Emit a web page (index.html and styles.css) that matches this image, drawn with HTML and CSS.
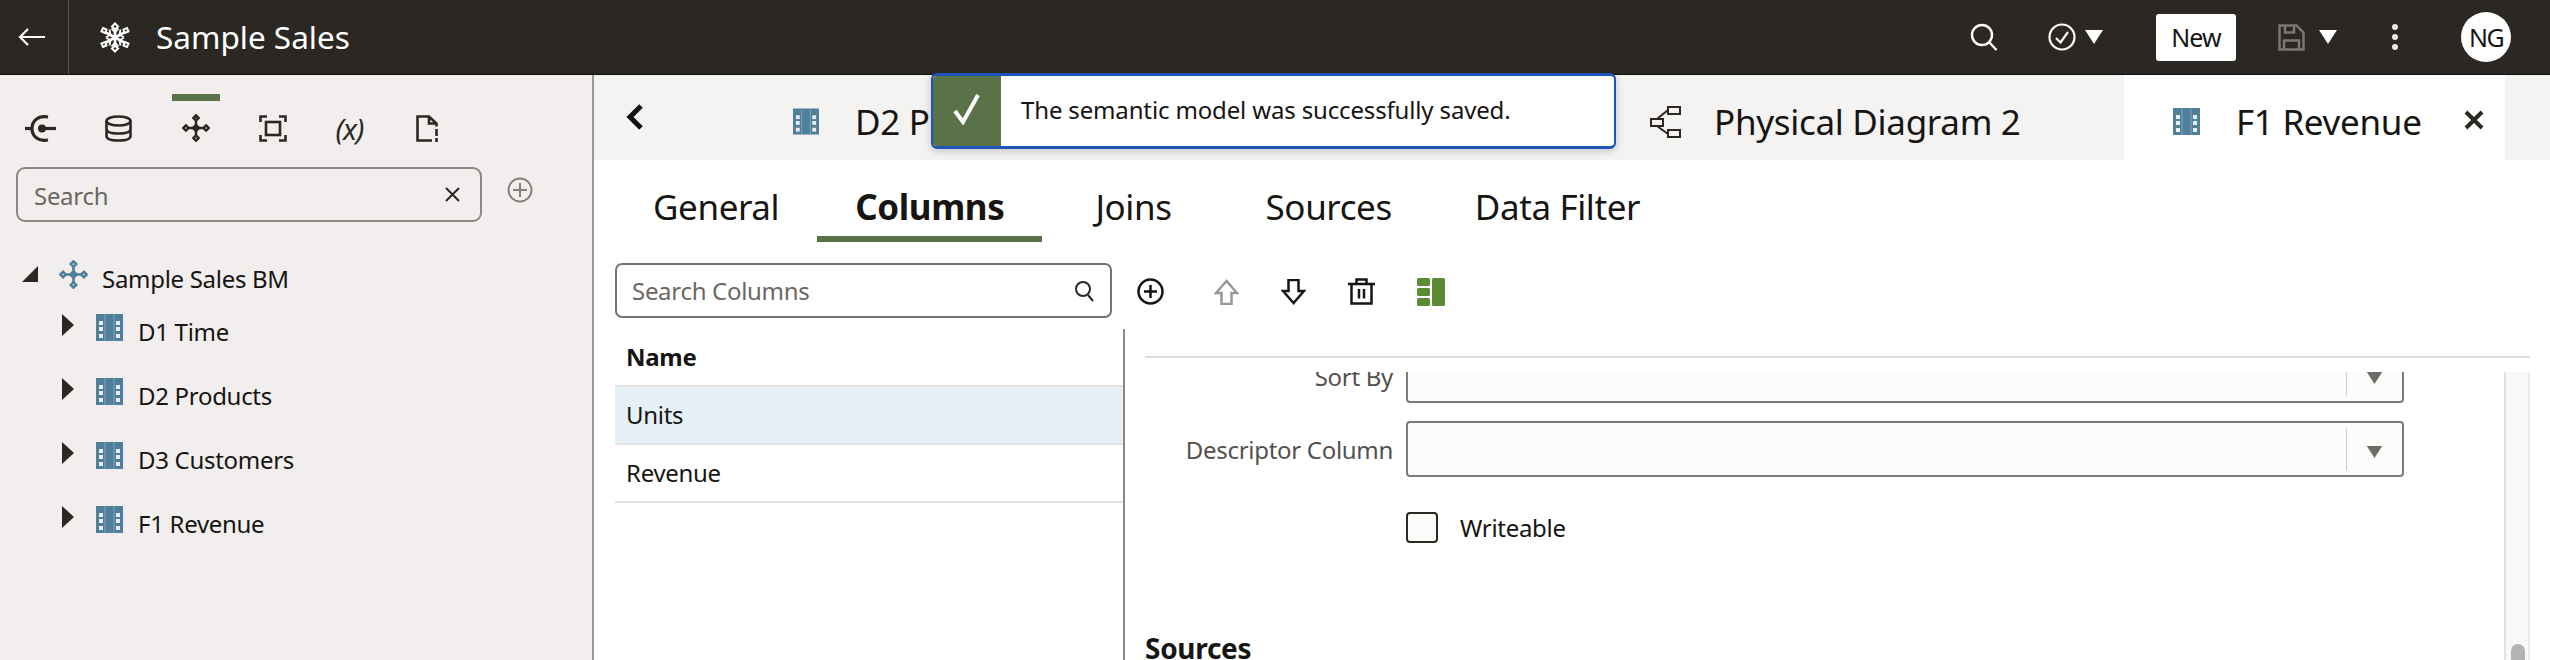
FILE: index.html
```html
<!DOCTYPE html>
<html lang="en">
<head>
  <meta charset="UTF-8" />
  <title>Sample Sales</title>
  <link rel="stylesheet" href="styles.css">
</head>
<body>
  <svg class="defs" width="0" height="0">
    <symbol id="table" viewBox="0 0 27 27">
      <rect width="27" height="27" fill="#4f7f9b"/>
      <path d="M9 0v27M18 0v27" stroke="#7ea3b8" stroke-width="1"/>
      <g fill="#e6eef3">
        <rect x="3" y="7" width="4" height="4"/><rect x="3" y="13" width="4" height="4"/><rect x="3" y="20" width="4" height="4"/>
        <rect x="20" y="7" width="4" height="4"/><rect x="20" y="13" width="4" height="4"/><rect x="20" y="20" width="4" height="4"/>
      </g>
    </symbol>
    <symbol id="model" viewBox="0 0 32 32">
      <g fill="none" stroke="currentColor" stroke-width="2.800">
        <path d="M16 7v18M7 16h18"/>
        <path d="M16 1.500l3 3-3 3-3-3zM16 24.500l3 3-3 3-3-3zM4.500 13l3 3-3 3-3-3zM27.500 13l3 3-3 3-3-3zM16 12.500l3.500 3.500-3.500 3.500-3.500-3.500z"/>
      </g>
    </symbol>
    <symbol id="caret-down" viewBox="0 0 18 14"><path d="M0 0h18l-9 14z" fill="currentColor"/></symbol>
    <symbol id="caret-right" viewBox="0 0 12 22"><path d="M0 0l12 11L0 22z" fill="#2b2723"/></symbol>
  </svg>

  <header class="topbar">
    <button class="back" aria-label="Back">
      <svg width="27" height="20" viewBox="0 0 27 20" fill="none" stroke="#fff" stroke-width="2.200"><path d="M27 10H2M10 2l-8 8 8 8"/></svg>
    </button>
    <svg class="logo" width="32" height="31" viewBox="0 0 32 31" fill="none" stroke="#fff" stroke-width="2.600">
      <path d="M16 6v19M6 10l20 11M26 10L6 21"/>
      <path d="M16 1.500l3 3-3 3-3-3zM16 23.500l3 3-3 3-3-3zM4 6l3.500 1.500L6 11 2.500 9.500zM28 6l1.500 3.500L26 11l-1.500-3.500zM4 25l-1.500-3.500L6 20l1.500 3.500zM28 25l-3.500-1.500L26 20l3.500 1.500z" stroke-width="2"/>
      <path d="M12.500 6.500l3.500 4 3.500-4M12.500 24.500l3.500-4 3.500 4M7 15.500l4.500-3-1-5M25 15.500l-4.500-3 1-5M7 15.500l4.500 3-1 5M25 15.500l-4.500 3 1 5" stroke-width="1.800"/>
    </svg>
    <div class="app-title">Sample Sales</div>
    <div class="top-actions">
      <svg class="act-search" width="28" height="28" viewBox="0 0 28 28" fill="none" stroke="#fff" stroke-width="2.400"><circle cx="12" cy="12" r="10"/><path d="M19 19l7.500 8"/></svg>
      <svg class="act-check" width="28" height="28" viewBox="0 0 28 28" fill="none" stroke="#fff" stroke-width="2.200"><circle cx="14" cy="14" r="12.500"/><path d="M8 15l4.500 4.500L20 9"/></svg>
      <svg class="act-caret" width="18" height="14"><use href="#caret-down"/></svg>
      <button class="new-btn">New</button>
      <svg class="act-save" width="27" height="27" viewBox="0 0 27 27" fill="none" stroke="#7a7672" stroke-width="2.500"><path d="M1.500 1.500h17l7 7v17h-24zM7 1.500v7h9v-7M6 25.500v-9h15v9"/></svg>
      <svg class="act-caret caret-save" width="18" height="14"><use href="#caret-down"/></svg>
      <div class="kebab"><i></i><i></i><i></i></div>
      <div class="avatar">NG</div>
    </div>
  </header>

  <div class="workspace">
    <aside class="sidebar">
      <div class="side-icons">
        <div class="side-icon">
          <svg width="31" height="27" viewBox="0 0 31 27" fill="none" stroke="#2b2723" stroke-width="3.200"><path d="M23 2C13 0 7 6 7 13.500S13 27 23 25"/><path d="M0 13.500h7"/><circle cx="17" cy="13.500" r="4" fill="#2b2723" stroke="none"/><path d="M17 13.500h14"/></svg>
        </div>
        <div class="side-icon">
          <svg width="27" height="27" viewBox="0 0 27 27" fill="none" stroke="#2b2723" stroke-width="2.600"><ellipse cx="13.500" cy="6" rx="12" ry="4.500"/><path d="M1.500 6v15c0 3 5 4.500 12 4.500s12-1.500 12-4.500V6M1.500 14c0 3 5 4.500 12 4.500s12-1.500 12-4.500"/></svg>
        </div>
        <div class="side-icon selected">
          <svg class="icon-dark" width="28" height="28"><use href="#model"/></svg>
        </div>
        <div class="side-icon">
          <svg width="28" height="27" viewBox="0 0 28 27" fill="none" stroke="#2b2723" stroke-width="2.600"><path d="M8 1.500H1.500V7M20 1.500h6.500V7M8 25.500H1.500V20M20 25.500h6.500V20"/><rect x="7" y="7" width="14" height="13"/></svg>
        </div>
        <div class="side-icon var-icon">(x)</div>
        <div class="side-icon">
          <svg width="22" height="27" viewBox="0 0 22 27" fill="none" stroke="#2b2723" stroke-width="2.600"><path d="M16 25.500H1.500v-24h11.500l7.500 7v3M13 1.500v7h7.500"/><path d="M20.500 14v7M20.500 23v4"/></svg>
        </div>
      </div>
      <div class="side-search-row">
        <div class="side-search">
          <span class="placeholder">Search</span>
          <svg width="15" height="15" viewBox="0 0 15 15" stroke="#2b2723" stroke-width="2"><path d="M1 1l13 13M14 1L1 14"/></svg>
        </div>
        <svg class="side-add" width="26" height="26" viewBox="0 0 26 26" fill="none" stroke="#85817d" stroke-width="2"><circle cx="13" cy="13" r="11.500"/><path d="M13 6v14M6 13h14"/></svg>
      </div>
      <ul class="tree">
        <li class="tree-root">
          <svg class="root-arrow" width="16" height="16" viewBox="0 0 16 16"><path d="M16 0v16H0z" fill="#2b2723"/></svg>
          <svg class="root-icon" width="29" height="29"><use href="#model"/></svg>
          <span>Sample Sales BM</span>
        </li>
        <li class="tree-item"><svg width="12" height="22"><use href="#caret-right"/></svg><svg class="item-icon" width="27" height="27"><use href="#table"/></svg><span>D1 Time</span></li>
        <li class="tree-item"><svg width="12" height="22"><use href="#caret-right"/></svg><svg class="item-icon" width="27" height="27"><use href="#table"/></svg><span>D2 Products</span></li>
        <li class="tree-item"><svg width="12" height="22"><use href="#caret-right"/></svg><svg class="item-icon" width="27" height="27"><use href="#table"/></svg><span>D3 Customers</span></li>
        <li class="tree-item"><svg width="12" height="22"><use href="#caret-right"/></svg><svg class="item-icon" width="27" height="27"><use href="#table"/></svg><span>F1 Revenue</span></li>
      </ul>
    </aside>

    <main class="main">
      <div class="tabstrip">
        <svg class="tab-prev" width="20" height="28" viewBox="0 0 20 28" fill="none" stroke="#111" stroke-width="5"><path d="M16 3L5 14l11 11"/></svg>
        <div class="doc-tab tab-d2"><svg width="26" height="27"><use href="#table"/></svg><span>D2 Products</span></div>
        <div class="doc-tab tab-diagram">
          <svg width="32" height="32" viewBox="0 0 32 32" fill="none" stroke="#2b2723" stroke-width="2"><rect x="18" y="1" width="12" height="7"/><rect x="1" y="13" width="12" height="7"/><rect x="18" y="24" width="12" height="7"/><path d="M18 4l-11 9M7 20l11 8"/></svg>
          <span>Physical Diagram 2</span>
        </div>
        <div class="doc-tab tab-active">
          <svg width="27" height="27"><use href="#table"/></svg><span>F1 Revenue</span>
          <svg class="tab-close" width="20" height="20" viewBox="0 0 20 20" stroke="#2b2723" stroke-width="4"><path d="M2 2l16 16M18 2L2 18"/></svg>
        </div>
        <div class="toast">
          <div class="toast-mark"><svg width="28" height="32" viewBox="0 0 28 32" fill="none" stroke="#fff" stroke-width="4"><path d="M2 18l8 11L25 2"/></svg></div>
          <div class="toast-text">The semantic model was successfully saved.</div>
        </div>
      </div>

      <nav class="subtabs">
        <a class="subtab">General</a>
        <a class="subtab current">Columns</a>
        <a class="subtab">Joins</a>
        <a class="subtab">Sources</a>
        <a class="subtab">Data Filter</a>
      </nav>

      <div class="toolbar">
        <div class="col-search">
          <span class="placeholder">Search Columns</span>
          <svg width="20" height="22" viewBox="0 0 20 22" fill="none" stroke="#2b2723" stroke-width="2"><circle cx="9" cy="9" r="7"/><path d="M14 15l5 6"/></svg>
        </div>
        <div class="tools">
          <svg width="27" height="27" viewBox="0 0 27 27" fill="none" stroke="#161513" stroke-width="2.500"><circle cx="13.500" cy="13.500" r="12"/><path d="M13.500 7v13M7 13.500h13"/></svg>
          <svg width="25" height="26" viewBox="0 0 25 26" fill="none" stroke="#9a9794" stroke-width="2.500"><path d="M12.500 2L2 14h5.500v11h10V14H23z"/></svg>
          <svg width="25" height="26" viewBox="0 0 25 26" fill="none" stroke="#161513" stroke-width="2.500"><path d="M12.500 24L2 12h5.500V1h10v11H23z"/></svg>
          <svg width="27" height="27" viewBox="0 0 27 27" fill="none" stroke="#161513" stroke-width="2.500"><path d="M0 6h27M3.500 6v19.500h20V6M8.500 6V1.500h10V6M11 11v9.500M16 11v9.500"/></svg>
          <svg width="28" height="28" viewBox="0 0 28 28" fill="#5c8a34"><rect width="13" height="8" rx="1.500"/><rect y="10" width="13" height="8" rx="1.500"/><rect y="20" width="13" height="8" rx="1.500"/><rect x="15" width="13" height="28" rx="1.500"/></svg>
        </div>
      </div>

      <div class="split">
        <section class="col-list">
          <div class="col-head">Name</div>
          <div class="col-row active">Units</div>
          <div class="col-row">Revenue</div>
        </section>
        <section class="detail">
          <div class="detail-rule"></div>
          <div class="detail-body">
            <div class="detail-scroll">
              <div class="form-row clipped">
                <label>Sort By</label>
                <div class="select"><span class="select-sep"></span><svg class="select-caret" width="17" height="12"><use href="#caret-down"/></svg></div>
              </div>
              <div class="form-row">
                <label>Descriptor Column</label>
                <div class="select"><span class="select-sep"></span><svg class="select-caret" width="17" height="12"><use href="#caret-down"/></svg></div>
              </div>
              <div class="check-row"><span class="checkbox"></span><span>Writeable</span></div>
              <h3 class="section-title">Sources</h3>
            </div>
            <div class="scrollbar"><div class="thumb"></div></div>
          </div>
        </section>
      </div>
    </main>
  </div>
</body>
</html>
```

FILE: styles.css
```css
* {
  box-sizing: border-box;
}

html, body {
  height: 660px;
  margin: 0;
  overflow: hidden;
}

body {
  background: #fff;
  color: #161513;
  font-family: "Noto Sans", sans-serif;
}

.defs {
  position: absolute;
}

svg {
  display: block;
  flex: none;
}

/* top bar */
.topbar {
  height: 75px;
  background: #2b2723;
  border-bottom: 1px solid #111;
  display: flex;
  align-items: center;
  color: #fff;
}

.back {
  width: 69px;
  height: 74px;
  padding: 0 0 0 18px;
  background: none;
  border: none;
  border-right: 1px solid #5c5854;
}

.logo {
  margin-left: 30px;
}

.app-title {
  margin-left: 25px;
  font-size: 31.500px;
  padding-bottom: 2px;
}

.top-actions {
  margin-left: auto;
  display: flex;
  align-items: center;
  padding-right: 39px;
  color: #fff;
}

.act-check {
  margin-left: 50px;
}

.act-caret {
  margin-left: 9px;
}

.new-btn {
  width: 80px;
  height: 47px;
  margin-left: 53px;
  background: #fff;
  border: none;
  border-radius: 3px;
  color: #161513;
  font: 25px "Noto Sans", sans-serif;
  letter-spacing: -1px;
}

.act-save {
  margin-left: 42px;
}

.caret-save {
  margin-left: 14px;
}

.kebab {
  margin-left: 55px;
  display: flex;
  flex-direction: column;
  gap: 4px;
}

.kebab i {
  width: 6px;
  height: 6px;
  border-radius: 50%;
  background: #e8e8e8;
}

.avatar {
  width: 50px;
  height: 50px;
  margin-left: 63px;
  border-radius: 50%;
  background: #fff;
  color: #161513;
  display: flex;
  align-items: center;
  justify-content: center;
  font-size: 25px;
  letter-spacing: -1.5px;
}

/* page */
.workspace {
  height: 585px;
  display: flex;
}

.sidebar {
  width: 594px;
  background: #f1eeed;
  border-right: 2px solid #9d9994;
  padding: 19px 0 0 16px;
}

.side-icons {
  display: flex;
}

.side-icon {
  width: 77px;
  height: 68px;
  display: flex;
  align-items: center;
  justify-content: center;
  position: relative;
}

.side-icons .side-icon:first-child {
  margin-left: -14px;
  margin-right: 1px;
}

.side-icon.selected::before {
  content: "";
  position: absolute;
  top: 0;
  left: 15px;
  width: 48px;
  height: 7px;
  background: #5a7247;
}

.icon-dark {
  color: #2b2723;
}

.var-icon {
  font-style: italic;
  font-size: 29px;
  letter-spacing: -1px;
  color: #2b2723;
}

.side-search-row {
  display: flex;
  margin-top: 5px;
  align-items: flex-start;
}

.side-search {
  width: 466px;
  height: 55px;
  border: 2px solid #8c8883;
  border-radius: 9px;
  padding: 0 20px 0 16px;
  display: flex;
  align-items: center;
  justify-content: space-between;
}

.placeholder {
  font-size: 24px;
  color: #6b6762;
  letter-spacing: -0.3px;
}

.side-search .placeholder {
  padding-top: 2px;
}

.side-add {
  margin: 10px 0 0 25px;
}

.tree {
  list-style: none;
  margin: 36px 0 0;
  padding: 0;
  font-size: 24px;
  letter-spacing: -0.3px;
}

.tree-root {
  display: flex;
  align-items: center;
  padding-left: 6px;
  height: 32px;
}

.root-icon {
  margin-left: 21px;
  color: #4f7f9b;
}

.tree-root span {
  margin: 8px 0 0 14px;
}

.tree-item {
  display: flex;
  align-items: flex-start;
  padding-left: 46px;
  height: 64px;
  padding-top: 9px;
}

.tree-item:nth-child(2) {
  margin-top: 15px;
}

.item-icon {
  margin-left: 22px;
}

.tree-item span {
  margin-left: 15px;
  line-height: 36px;
}

.main {
  flex: 1;
  min-width: 0;
}

/* document tabs */
.tabstrip {
  height: 85px;
  background: #f4f3f2;
  display: flex;
  position: relative;
  font-size: 35px;
  letter-spacing: -0.3px;
  white-space: nowrap;
}

.tab-prev {
  margin: 28px 0 0 31px;
}

.doc-tab {
  display: flex;
  align-items: center;
  padding-top: 8px;
}

.tab-d2 {
  margin-left: 148px;
  gap: 36px;
  width: 857px;
}

.tab-diagram {
  gap: 32px;
  width: 474px;
}

.tab-active {
  width: 381px;
  background: #fff;
  padding-left: 49px;
  gap: 36px;
}

.tab-close {
  margin-left: 6px;
  margin-bottom: 4px;
}

.toast {
  position: absolute;
  left: 337px;
  top: -2px;
  width: 685px;
  height: 76px;
  display: flex;
  background: #fff;
  border: 2px solid #1f55b8;
  border-width: 3px 2px;
  border-radius: 6px;
  overflow: hidden;
  box-shadow: 0 2px 8px rgba(0, 0, 0, 0.2);
  font-size: 24px;
  letter-spacing: -0.15px;
}

.toast-mark {
  width: 68px;
  background: #5a7247;
  display: flex;
  align-items: center;
  justify-content: center;
  padding-bottom: 4px;
}

.toast-text {
  margin-left: 20px;
  line-height: 67px;
}

/* section tabs */
.subtabs {
  height: 84px;
  display: flex;
  padding-left: 59px;
  font-size: 35px;
  letter-spacing: -0.4px;
}

.subtab {
  height: 84px;
  padding: 23px 0 0;
  line-height: 48px;
}

.subtab:nth-child(1) {
  margin-right: 76px;
}

.subtab:nth-child(2) {
  margin-right: 91px;
}

.subtab:nth-child(3) {
  margin-right: 94px;
}

.subtab:nth-child(4) {
  margin-right: 83px;
}

.subtab.current {
  font-weight: 700;
  position: relative;
}

.subtab.current::after {
  content: "";
  position: absolute;
  left: -38px;
  right: -38px;
  bottom: 2px;
  height: 6px;
  background: #5a7247;
}

/* column toolbar */
.toolbar {
  height: 85px;
  display: flex;
  align-items: flex-start;
  padding: 19px 0 0 21px;
}

.col-search {
  width: 497px;
  height: 55px;
  border: 2px solid #77736e;
  border-radius: 7px;
  padding: 0 16px 0 15px;
  display: flex;
  align-items: center;
  justify-content: space-between;
}

.tools {
  display: flex;
  align-items: center;
  gap: 42px;
  height: 57px;
  margin-left: 25px;
}

.tools svg:first-child {
  margin-right: 8px;
}

/* columns + details */
.split {
  display: flex;
  height: 331px;
  margin-left: 21px;
}

.col-list {
  width: 510px;
  border-right: 2px solid #8c8883;
  font-size: 24px;
  letter-spacing: -0.3px;
}

.col-head {
  height: 58px;
  padding: 8px 0 0 11px;
  line-height: 40px;
  font-weight: 700;
  border-bottom: 2px solid #e4e2e0;
}

.col-row {
  height: 58px;
  padding-left: 11px;
  line-height: 55px;
  border-bottom: 2px solid #e4e2e0;
}

.col-row.active {
  background: #e5f1f7;
}

.detail {
  flex: 1;
  min-width: 0;
  padding: 27px 20px 0 20px;
}

.detail-rule {
  height: 2px;
  background: #dedcda;
}

.detail-body {
  height: 302px;
  margin-top: 14px;
  display: flex;
  overflow: hidden;
}

.detail-scroll {
  flex: 1;
  min-width: 0;
  margin-top: -25px;
  font-size: 24px;
  letter-spacing: -0.3px;
}

.form-row {
  display: flex;
  align-items: center;
  height: 56px;
  margin-bottom: 18px;
}

.form-row label {
  width: 248px;
  text-align: right;
  color: #54504c;
}

.clipped label {
  padding-top: 3px;
}

.select {
  width: 998px;
  height: 56px;
  margin-left: 13px;
  background: #fcfcfb;
  border: 2px solid #7e7a75;
  border-radius: 4px;
  display: flex;
  align-items: center;
  justify-content: flex-end;
  padding-right: 19px;
}

.select-sep {
  width: 1px;
  height: 42px;
  background: #cfcdcb;
  margin-right: 19px;
}

.select-caret {
  color: #6f6b66;
  margin-top: 6px;
}

.check-row {
  display: flex;
  align-items: center;
  margin: 35px 0 0 261px;
  height: 31px;
  gap: 22px;
}

.checkbox {
  width: 32px;
  height: 31px;
  background: #fcfcfb;
  border: 2px solid #2b2723;
  border-radius: 4px;
}

.section-title {
  margin: 87px 0 0;
  font-size: 28px;
  line-height: 36px;
  font-weight: 700;
}

.scrollbar {
  width: 26px;
  background: #f8f8f8;
  border-left: 2px solid #e2e1df;
  border-right: 2px solid #ecebea;
  padding: 272px 0 0 5px;
}

.thumb {
  width: 14px;
  height: 60px;
  border-radius: 7px;
  background: #b4b3b2;
}
```
